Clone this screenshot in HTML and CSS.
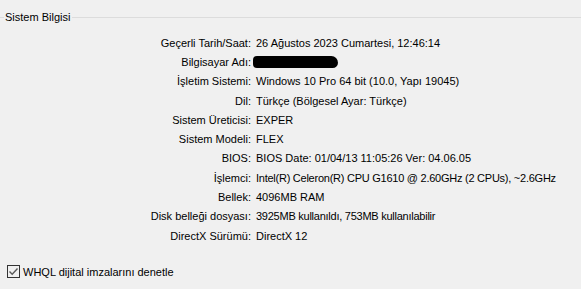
FILE: index.html
```html
<!DOCTYPE html>
<html>
<head>
    <title>Sistem Bilgisi</title>
    <link rel="stylesheet" href="styles.css">
</head>
<body>
    <div class="group">
        <div class="group-title">
            <span class="line short"></span>
            <span class="title">Sistem Bilgisi</span>
            <span class="line"></span>
        </div>

        <div class="info">
            <div class="label">Geçerli Tarih/Saat:</div>
            <div class="value">26 Ağustos 2023 Cumartesi, 12:46:14</div>

            <div class="label">Bilgisayar Adı:</div>
            <div class="value"><span class="redacted"></span></div>

            <div class="label">İşletim Sistemi:</div>
            <div class="value">Windows 10 Pro 64 bit (10.0, Yapı 19045)</div>

            <div class="label">Dil:</div>
            <div class="value">Türkçe (Bölgesel Ayar: Türkçe)</div>

            <div class="label">Sistem Üreticisi:</div>
            <div class="value">EXPER</div>

            <div class="label">Sistem Modeli:</div>
            <div class="value">FLEX</div>

            <div class="label">BIOS:</div>
            <div class="value">BIOS Date: 01/04/13 11:05:26 Ver: 04.06.05</div>

            <div class="label">İşlemci:</div>
            <div class="value tight">Intel(R) Celeron(R) CPU G1610 @ 2.60GHz (2 CPUs), ~2.6GHz</div>

            <div class="label">Bellek:</div>
            <div class="value">4096MB RAM</div>

            <div class="label">Disk belleği dosyası:</div>
            <div class="value tight">3925MB kullanıldı, 753MB kullanılabilir</div>

            <div class="label">DirectX Sürümü:</div>
            <div class="value">DirectX 12</div>
        </div>
    </div>

    <label class="check">
        <span class="box">
            <svg width="11" height="11" viewBox="0 0 11 11">
                <path d="M1.5 5.5 L4.2 8.2 L9.5 2.5" fill="none" stroke="#5a5a5a" stroke-width="1.4"/>
            </svg>
        </span>
        WHQL dijital imzalarını denetle
    </label>
</body>
</html>
```
FILE: styles.css
```css
body {
    margin: 0;
    background: #f0f0f0;
    color: #000;
    font-family: 'Liberation Sans', Arial, sans-serif;
    font-size: 11px;
    width: 581px;
    height: 289px;
    overflow: hidden;
}
.group {
    padding-top: 10px;
}
.group-title {
    display: flex;
    align-items: center;
    height: 14px;
}
.line {
    flex: 1;
    height: 1px;
    background: #dcdcdc;
}
.line.short {
    flex: 0 0 4px;
}
.title {
    padding: 0 2px 0 1px;
}
.info {
    display: grid;
    grid-template-columns: 251px auto;
    grid-auto-rows: 19.3px;
    column-gap: 5px;
    margin-top: 9px;
    align-items: center;
}
.label {
    text-align: right;
    white-space: nowrap;
}
.value {
    white-space: nowrap;
}
.value.tight {
    letter-spacing: -0.25px;
}
.redacted {
    display: inline-block;
    vertical-align: middle;
    width: 85px;
    height: 12px;
    margin-left: -3px;
    background: #000;
    border-radius: 6px 10px 8px 6px;
}
.check {
    display: flex;
    align-items: center;
    gap: 3px;
    margin: 20px 0 0 7px;
}
.box {
    width: 11px;
    height: 11px;
    border: 1px solid #333;
    display: flex;
}
```
